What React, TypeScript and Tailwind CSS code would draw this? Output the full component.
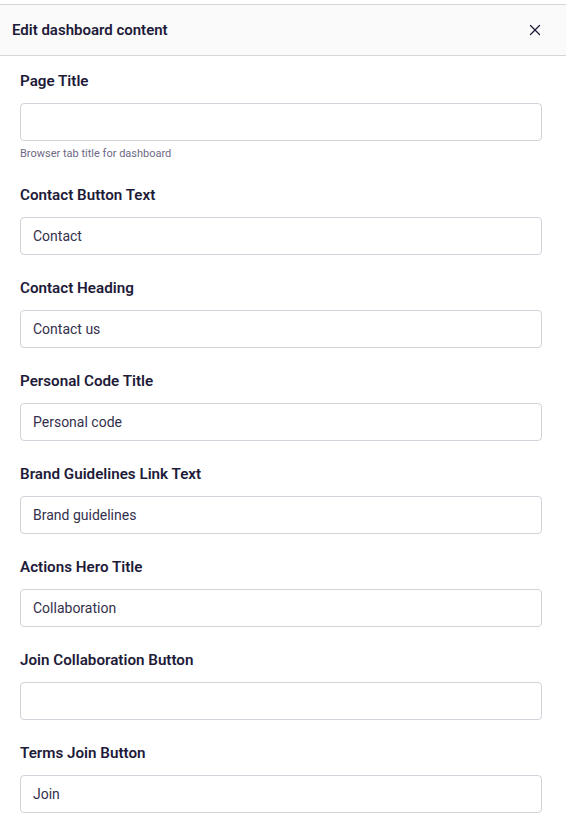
import { X } from "lucide-react";

const fields: { label: string; value: string; hint?: string }[] = [
  { label: "Page Title", value: "", hint: "Browser tab title for dashboard" },
  { label: "Contact Button Text", value: "Contact" },
  { label: "Contact Heading", value: "Contact us" },
  { label: "Personal Code Title", value: "Personal code" },
  { label: "Brand Guidelines Link Text", value: "Brand guidelines" },
  { label: "Actions Hero Title", value: "Collaboration" },
  { label: "Join Collaboration Button", value: "" },
  { label: "Terms Join Button", value: "Join" },
];

export default function App() {
  return (
    <div className="min-h-screen bg-white pt-1 font-['Roboto',sans-serif]">
      {/* HEADER */}
      <div className="flex h-[52px] items-center justify-between border-y border-[#d6d5db] bg-[#fafafa] pl-3 pr-[22px]">
        <h2 className="text-[15px] font-semibold text-[#1e1b39]">
          Edit dashboard content
        </h2>
        <button className="text-[#1e1b39]">
          <X size={18} strokeWidth={1.75} />
        </button>
      </div>

      {/* FIELDS */}
      <div className="flex flex-col gap-[23px] pl-5 pr-6 pt-[15px]">
        {fields.map((f) => (
          <div key={f.label} className="flex flex-col">
            <label className="text-[15.2px] font-semibold leading-5 text-[#1e1b39]">
              {f.label}
            </label>
            <input
              defaultValue={f.value}
              className="mt-3 h-[38px] w-full rounded-[4px] border border-[#d3d1da] px-3 text-[14px] text-[#34304c] outline-none"
            />
            {f.hint && (
              <p className="mt-[5px] text-[11px] leading-4 text-[#6e6a85]">
                {f.hint}
              </p>
            )}
          </div>
        ))}
      </div>
    </div>
  );
}
